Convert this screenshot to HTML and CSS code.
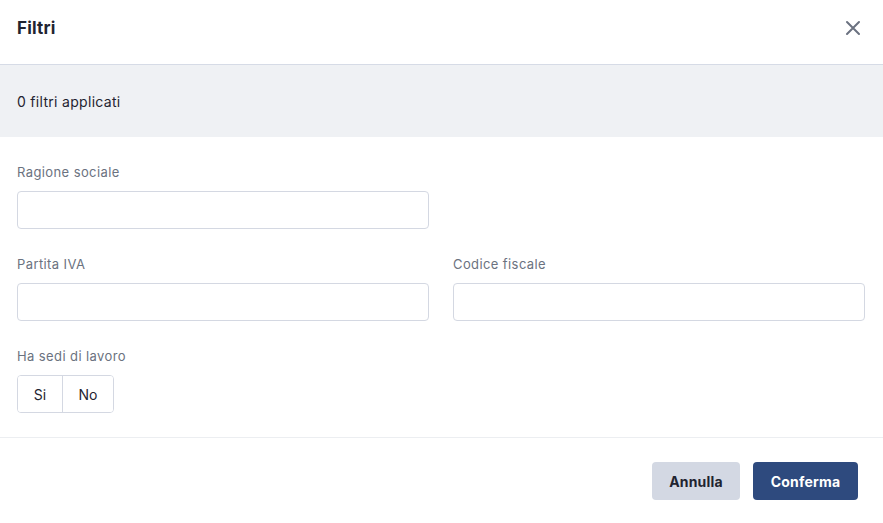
FILE: index.html
```html
<!DOCTYPE html>
<html lang="it">
<head>
<meta charset="utf-8">
<title>Filtri</title>
<link rel="stylesheet" href="styles.css">
</head>
<body>
<div class="modal">
  <header class="modal-header">
    <h2 class="modal-title">Filtri</h2>
    <button class="close-btn" type="button" aria-label="Chiudi">
      <svg width="16" height="16" viewBox="0 0 16 16"><path d="M2 2L14 14M14 2L2 14" stroke="currentColor" stroke-width="2" stroke-linecap="round" fill="none"/></svg>
    </button>
  </header>
  <div class="summary">0 filtri applicati</div>
  <div class="modal-body">
    <div class="grid">
      <label class="field">
        <span class="field-label">Ragione sociale</span>
        <input class="input" type="text">
      </label>
      <div></div>
      <label class="field">
        <span class="field-label">Partita IVA</span>
        <input class="input" type="text">
      </label>
      <label class="field">
        <span class="field-label">Codice fiscale</span>
        <input class="input" type="text">
      </label>
      <div class="field">
        <span class="field-label">Ha sedi di lavoro</span>
        <div class="toggle">
          <button type="button" class="toggle-item yes">Si</button>
          <button type="button" class="toggle-item no">No</button>
        </div>
      </div>
    </div>
  </div>
  <footer class="modal-footer">
    <button type="button" class="btn btn-secondary">Annulla</button>
    <button type="button" class="btn btn-primary">Conferma</button>
  </footer>
</div>
</body>
</html>
```
FILE: styles.css
```css
* { box-sizing: border-box; }

html, body {
  margin: 0;
  padding: 0;
  background: #ffffff;
}

body {
  font-family: "Inter", "Noto Sans", sans-serif;
  color: #1f2937;
}

.modal {
  width: 883px;
  height: 523px;
  display: flex;
  flex-direction: column;
}

.modal-header {
  height: 65px;
  display: flex;
  align-items: center;
  justify-content: space-between;
  padding: 0 17px 8px 17px;
  border-bottom: 1px solid #d6dbe6;
}

.modal-title {
  margin: 0;
  font-size: 17px;
  font-weight: 700;
  letter-spacing: 0.2px;
  color: #1f2430;
}

.close-btn {
  border: 0;
  background: none;
  padding: 0;
  width: 16px;
  height: 16px;
  color: #6b7280;
  display: flex;
  margin-right: 5px;
}

.summary {
  height: 72px;
  background: #eff1f4;
  display: flex;
  align-items: center;
  padding: 0 17px;
  font-size: 14px;
  letter-spacing: 0.3px;
  color: #1f2430;
}

.modal-body {
  padding: 26px 18px 24px 17px;
  border-bottom: 1px solid #eceef1;
}

.grid {
  display: grid;
  grid-template-columns: 1fr 1fr;
  column-gap: 24px;
  row-gap: 26px;
}

.field {
  display: flex;
  flex-direction: column;
  gap: 10px;
}

.field-label {
  font-size: 13px;
  letter-spacing: 0.4px;
  color: #6b7280;
  line-height: 18px;
}

.input {
  height: 38px;
  width: 100%;
  border: 1px solid #d4d8e2;
  border-radius: 4px;
  background: #fff;
  font: inherit;
}

.toggle {
  display: flex;
  width: 97px;
  height: 38px;
  border: 1px solid #d4d8e2;
  border-radius: 4px;
  overflow: hidden;
}

.toggle-item {
  border: 0;
  background: #fff;
  font-family: inherit;
  font-size: 14px;
  color: #1f2430;
  padding: 0;
}

.toggle-item.yes {
  width: 45px;
  border-right: 1px solid #d4d8e2;
}

.toggle-item.no {
  flex: 1;
}

.modal-footer {
  display: flex;
  justify-content: flex-end;
  gap: 13px;
  padding: 24px 25px 0 0;
}

.btn {
  height: 38px;
  border: 0;
  border-radius: 4px;
  font-family: inherit;
  font-size: 14px;
  font-weight: 700;
  letter-spacing: 0.2px;
  padding: 0;
}

.btn-secondary {
  width: 88px;
  background: #d3d8e3;
  color: #1f2430;
}

.btn-primary {
  width: 105px;
  background: #2e4a7e;
  color: #ffffff;
}
```
